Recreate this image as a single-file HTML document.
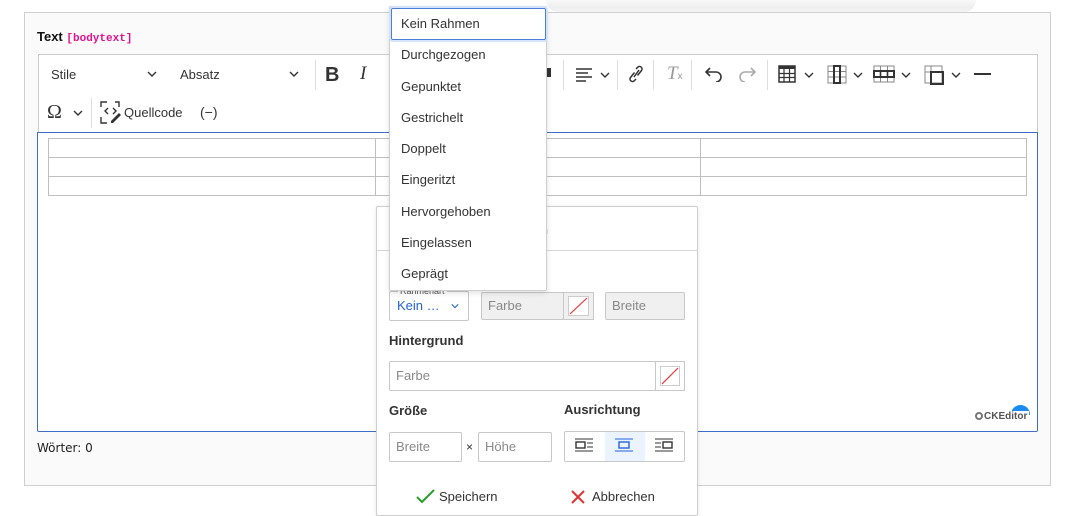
<!DOCTYPE html>
<html><head><meta charset="utf-8">
<style>
*{box-sizing:border-box;margin:0;padding:0}
body{width:1075px;height:504px;overflow:hidden;background:#fff;font-family:"Liberation Sans",sans-serif;color:#333;position:relative}
.a{position:absolute}
.sep{position:absolute;width:1px;background:#ddd}
.ic{position:absolute}
.dd{font-size:13px;color:#333}
.chev{position:absolute;width:10px;height:6px}
.tb td{border:1px solid #bfbfbf;height:19px}
.item{position:absolute;left:0;width:157px;height:31px;font-size:13px;color:#333;padding-left:11px;line-height:31px}
.inp{position:absolute;border:1px solid #c8c8c8;border-radius:2px;font-size:13px;color:#888;padding-left:6px;background:#fff}
.lbl{position:absolute;font-size:13px;font-weight:bold;color:#333}
</style></head><body>
<!-- panel -->
<div class="a" style="left:24px;top:12px;width:1027px;height:474px;background:#fafafa;border:1px solid #cfcfcf"></div>
<!-- top shadow -->
<div class="a" style="left:546px;top:0;width:430px;height:12px;background:linear-gradient(#f8f8f8,#ececec 60%,#f3f3f3);border-radius:0 0 12px 12px;opacity:.9"></div>
<div class="a" style="left:37px;top:29px;font-size:13px;font-weight:bold;color:#111">Text <span style="font-family:'Liberation Mono',monospace;font-size:11px;color:#e2128f;font-weight:bold">[bodytext]</span></div>
<!-- toolbar -->
<div class="a" style="left:38px;top:54px;width:1000px;height:79px;background:#fff;border:1px solid #ccc;border-bottom:none"></div>
<div class="a dd" style="left:51px;top:67px">Stile</div>
<svg class="chev" style="left:147px;top:71px" viewBox="0 0 10 6"><path d="M1 1l4 4 4-4" fill="none" stroke="#333" stroke-width="1.4"/></svg>
<div class="a dd" style="left:180px;top:67px">Absatz</div>
<svg class="chev" style="left:289px;top:71px" viewBox="0 0 10 6"><path d="M1 1l4 4 4-4" fill="none" stroke="#333" stroke-width="1.4"/></svg>
<div class="sep" style="left:315px;top:60px;height:30px"></div>
<div class="a" style="left:325px;top:64px;font-size:20px;font-weight:bold;color:#333">B</div>
<div class="a" style="left:360px;top:63px;font-size:19px;font-style:italic;font-family:'Liberation Serif',serif;color:#333">I</div>
<div class="a" style="left:546px;top:68px;width:5px;height:9px;background:#333"></div>
<div class="sep" style="left:563px;top:60px;height:30px"></div>
<svg class="ic" style="left:575px;top:67px" width="18" height="16" viewBox="0 0 18 16"><path d="M1 2h16M1 6h12M1 10h16M1 14h10" stroke="#333" stroke-width="1.4"/></svg>
<svg class="chev" style="left:600px;top:72px" viewBox="0 0 10 6"><path d="M1 1l4 4 4-4" fill="none" stroke="#333" stroke-width="1.4"/></svg>
<div class="sep" style="left:617px;top:60px;height:30px"></div>
<svg class="ic" style="left:627px;top:64px" width="18" height="20" viewBox="0 0 18 20"><path d="M7 13l5-7M9 5l2-2a2.5 2.5 0 013.5 3.5l-4 5M9 15l-2 2a2.5 2.5 0 01-3.5-3.5l4-5" fill="none" stroke="#333" stroke-width="1.5"/></svg>
<div class="sep" style="left:653px;top:60px;height:30px"></div>
<div class="a" style="left:667px;top:63px;font-size:19px;font-style:italic;font-family:'Liberation Serif',serif;color:#999">T<span style="font-size:10px;font-style:normal;font-family:'Liberation Sans'">x</span></div>
<div class="sep" style="left:691px;top:60px;height:30px"></div>
<svg class="ic" style="left:705px;top:66px" width="18" height="16" viewBox="0 0 18 16"><path d="M5 2L1 6l4 4M1 6h10a5 5 0 010 10" fill="none" stroke="#333" stroke-width="1.6"/></svg>
<svg class="ic" style="left:738px;top:66px" width="18" height="16" viewBox="0 0 18 16"><path d="M13 2l4 4-4 4M17 6H7a5 5 0 000 10" fill="none" stroke="#aaa" stroke-width="1.6"/></svg>
<div class="sep" style="left:767px;top:60px;height:30px"></div>
<svg class="ic" style="left:778px;top:65px" width="18" height="18" viewBox="0 0 18 18"><rect x="1" y="1" width="16" height="16" fill="none" stroke="#333" stroke-width="1.5"/><rect x="1" y="1" width="16" height="3" fill="#333"/><path d="M1 8.5h16M1 12.5h16M6 4v13M11.5 4v13" stroke="#333" stroke-width="1.2"/></svg>
<svg class="chev" style="left:804px;top:72px" viewBox="0 0 10 6"><path d="M1 1l4 4 4-4" fill="none" stroke="#333" stroke-width="1.4"/></svg>
<svg class="ic" style="left:827px;top:65px" width="20" height="19" viewBox="0 0 20 19"><path d="M1 1h18v17H1zM1 6.5h18M1 12h18" fill="none" stroke="#888" stroke-width="1"/><rect x="7" y="1" width="6" height="17" fill="none" stroke="#333" stroke-width="2"/></svg>
<svg class="chev" style="left:853px;top:72px" viewBox="0 0 10 6"><path d="M1 1l4 4 4-4" fill="none" stroke="#333" stroke-width="1.4"/></svg>
<svg class="ic" style="left:873px;top:65px" width="22" height="18" viewBox="0 0 22 18"><path d="M1 1h20v16H1zM7.5 1v16M14.5 1v16" fill="none" stroke="#888" stroke-width="1"/><rect x="1" y="6" width="20" height="6" fill="none" stroke="#333" stroke-width="2"/><path d="M7.5 6v6M14.5 6v6" stroke="#333" stroke-width="1.6"/></svg>
<svg class="chev" style="left:901px;top:72px" viewBox="0 0 10 6"><path d="M1 1l4 4 4-4" fill="none" stroke="#333" stroke-width="1.4"/></svg>
<svg class="ic" style="left:924px;top:65px" width="20" height="20" viewBox="0 0 20 20"><path d="M1 1h17v17H1zM7 1v17M1 7h17" fill="none" stroke="#888" stroke-width="1"/><rect x="7" y="7" width="12" height="12" fill="none" stroke="#333" stroke-width="2"/></svg>
<svg class="chev" style="left:951px;top:72px" viewBox="0 0 10 6"><path d="M1 1l4 4 4-4" fill="none" stroke="#333" stroke-width="1.4"/></svg>
<div class="a" style="left:974px;top:73px;width:17px;height:2px;background:#333"></div>
<!-- row 2 -->
<div class="a" style="left:47px;top:101px;font-size:20px;font-family:'Liberation Serif',serif;color:#333">Ω</div>
<svg class="chev" style="left:73px;top:110px" viewBox="0 0 10 6"><path d="M1 1l4 4 4-4" fill="none" stroke="#333" stroke-width="1.4"/></svg>
<div class="sep" style="left:91px;top:98px;height:30px"></div>
<svg class="ic" style="left:99px;top:101px" width="24" height="24" viewBox="0 0 24 24"><path d="M8 1H2v5M2 16v6h6M16 1h4v5" fill="none" stroke="#333" stroke-width="1.4"/><path d="M9 7l-3 3 3 3M14 7l3 3-3 3" fill="none" stroke="#333" stroke-width="1.4"/><path d="M12 20l8-8 2 2-8 8h-2z" fill="#333"/></svg>
<div class="a dd" style="left:124px;top:105px">Quellcode</div>
<div class="a dd" style="left:200px;top:104px;font-size:14px">(−)</div>
<!-- content area -->
<div class="a" style="left:37px;top:132px;width:1001px;height:300px;background:#fff;border:1px solid #3f6fc4;border-radius:0 0 2px 2px"></div>
<table class="a tb" style="left:48px;top:138px;width:979px;border-collapse:collapse">
<tr><td style="width:327px"></td><td style="width:325px"></td><td></td></tr>
<tr><td></td><td></td><td></td></tr>
<tr><td></td><td></td><td></td></tr></table>
<div class="a" style="left:1011px;top:405px;width:19px;height:10px;background:#1a8cf0;border-radius:10px 10px 0 0"></div>
<div class="a" style="left:973px;top:411px;font-size:10px;font-weight:bold;color:#555;background:#fff;padding:0 2px"><span style="display:inline-block;width:8px;height:8px;border:2px solid #777;border-radius:50%;vertical-align:-1px;margin-right:1px"></span>CKEditor</div>
<div class="a" style="left:37px;top:441px;color:#222;font-family:'DejaVu Sans',sans-serif;font-size:12px">Wörter: 0</div>
<!-- dialog -->
<div class="a" style="left:376px;top:206px;width:322px;height:310px;background:#fff;border:1px solid #cfcfcf;border-radius:2px;box-shadow:0 1px 4px rgba(0,0,0,.1)"></div>
<div class="a" style="left:377px;top:250px;width:320px;height:1px;background:#d5d5d5"></div>
<div class="a" style="left:540px;top:222px;font-size:13px;font-weight:bold;color:#333">n</div>
<div class="inp" style="left:389px;top:291px;width:80px;height:30px"></div>
<div class="a" style="left:398px;top:286px;font-size:9px;color:#555;background:#fff;padding:0 2px">Rahmenart</div>
<div class="a" style="left:397px;top:298px;font-size:13px;color:#2463d6">Kein …</div>
<svg class="chev" style="left:451px;top:303px;width:8px" viewBox="0 0 10 6"><path d="M1 1l4 4 4-4" fill="none" stroke="#2463d6" stroke-width="1.4"/></svg>
<div class="inp" style="left:481px;top:292px;width:83px;height:28px;background:#f0f0f0;line-height:26px">Farbe</div>
<div class="a" style="left:563px;top:292px;width:31px;height:28px;border:1px solid #c8c8c8;background:#f0f0f0"></div>
<svg class="a" style="left:568px;top:296px" width="21" height="20" viewBox="0 0 21 20"><rect x=".5" y=".5" width="20" height="19" fill="#fff" stroke="#ccc"/><path d="M2 18L19 2" stroke="#e33" stroke-width="1.2"/></svg>
<div class="inp" style="left:605px;top:292px;width:80px;height:28px;background:#f0f0f0;line-height:26px">Breite</div>
<div class="lbl" style="left:389px;top:333px">Hintergrund</div>
<div class="inp" style="left:389px;top:361px;width:267px;height:30px;line-height:28px">Farbe</div>
<div class="a" style="left:655px;top:361px;width:30px;height:30px;border:1px solid #c8c8c8;background:#fff"></div>
<svg class="a" style="left:660px;top:366px" width="20" height="20" viewBox="0 0 20 20"><rect x=".5" y=".5" width="19" height="19" fill="#fff" stroke="#ccc"/><path d="M2 18L18 2" stroke="#e33" stroke-width="1.2"/></svg>
<div class="lbl" style="left:389px;top:403px">Größe</div>
<div class="lbl" style="left:564px;top:402px">Ausrichtung</div>
<div class="inp" style="left:389px;top:432px;width:73px;height:30px;line-height:28px">Breite</div>
<div class="a" style="left:466px;top:440px;font-size:12px;color:#333">×</div>
<div class="inp" style="left:478px;top:432px;width:74px;height:30px;line-height:28px">Höhe</div>
<div class="a" style="left:564px;top:431px;width:121px;height:31px;border:1px solid #c8c8c8;border-radius:2px;background:#fff"></div>
<div class="a" style="left:605px;top:432px;width:40px;height:29px;background:#eaf3fe"></div>
<svg class="a" style="left:575px;top:438px" width="18" height="14" viewBox="0 0 18 14"><path d="M0 1h18M0 13h18M12 5h6M12 9h6" stroke="#333"/><rect x="1" y="4" width="9" height="6" fill="none" stroke="#333" stroke-width="1.4"/></svg>
<svg class="a" style="left:615px;top:438px" width="18" height="14" viewBox="0 0 18 14"><path d="M0 1h18M0 13h18" stroke="#2463d6"/><rect x="4" y="4" width="10" height="6" fill="none" stroke="#2463d6" stroke-width="1.4"/></svg>
<svg class="a" style="left:655px;top:438px" width="18" height="14" viewBox="0 0 18 14"><path d="M0 1h18M0 13h18M0 5h6M0 9h6" stroke="#333"/><rect x="8" y="4" width="9" height="6" fill="none" stroke="#333" stroke-width="1.4"/></svg>
<svg class="a" style="left:416px;top:489px" width="19" height="15" viewBox="0 0 19 15"><path d="M1 8l5 5L18 1" fill="none" stroke="#2a9d2a" stroke-width="2"/></svg>
<div class="a" style="left:439px;top:489px;font-size:13px;color:#333">Speichern</div>
<svg class="a" style="left:571px;top:490px" width="14" height="14" viewBox="0 0 14 14"><path d="M1 1l12 12M13 1L1 13" stroke="#d33" stroke-width="2"/></svg>
<div class="a" style="left:592px;top:489px;font-size:13px;color:#333">Abbrechen</div>
<!-- dropdown -->
<div class="a" style="left:389px;top:6px;width:158px;height:285px;background:#fff;border:1px solid #cfcfcf;border-radius:2px;box-shadow:0 2px 6px rgba(0,0,0,.12)">
<div class="item" style="top:1px;left:1px;width:155px;height:32px;border:1px solid #4a7fd4;border-radius:2px;box-shadow:0 0 0 2px #d4e3f9;line-height:30px;padding-left:9px">Kein Rahmen</div>
<div class="item" style="top:32px">Durchgezogen</div>
<div class="item" style="top:64px">Gepunktet</div>
<div class="item" style="top:95px">Gestrichelt</div>
<div class="item" style="top:126px">Doppelt</div>
<div class="item" style="top:157px">Eingeritzt</div>
<div class="item" style="top:189px">Hervorgehoben</div>
<div class="item" style="top:220px">Eingelassen</div>
<div class="item" style="top:251px">Geprägt</div>
</div>
</body></html>
